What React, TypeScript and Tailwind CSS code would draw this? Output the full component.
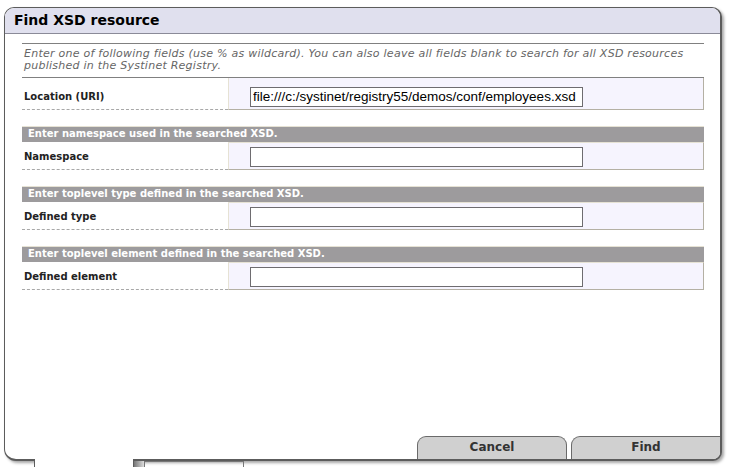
import React from 'react';

const rows = [
  { title: null, label: 'Location (URI)', value: 'file:///c:/systinet/registry55/demos/conf/employees.xsd' },
  { title: 'Enter namespace used in the searched XSD.', label: 'Namespace', value: '' },
  { title: 'Enter toplevel type defined in the searched XSD.', label: 'Defined type', value: '' },
  { title: 'Enter toplevel element defined in the searched XSD.', label: 'Defined element', value: '' },
];

function FieldRow({ label, value, first }: { label: string; value: string; first?: boolean }) {
  return (
    <div className="flex">
      <div
        className={
          'w-[206px] pl-[2px] border-b border-dashed border-[#a8a8a8] text-[10px] leading-[20px] font-bold text-[#222] pb-[2px] ' +
          (first ? 'pt-[9px]' : 'pt-[5px]')
        }
      >
        {label}
      </div>
      <div
        className={
          'flex-1 bg-[#f6f4fe] border-l border-l-[#e6e2d4] border-r border-b border-[#b4b0a4] pl-[21px] ' +
          (first ? 'pt-[9px] pb-[2px]' : 'border-t border-t-[#e6e2d4] pt-[4px] pb-[2px]')
        }
      >
        <input
          readOnly
          value={value}
          className="block w-[333px] h-[20px] bg-white border border-[#6e6c70] px-[2px] text-[13.5px] text-black outline-none font-['Liberation_Sans',Arial,sans-serif]"
        />
      </div>
    </div>
  );
}

export default function App() {
  return (
    <div className="w-[729px] h-[467px] bg-white overflow-hidden relative font-['DejaVu_Sans',Verdana,sans-serif]">
      <div className="ml-[4px] mt-[7px] w-[718px] h-[454px] border border-[#5c5c5c] border-r-2 border-b-2 rounded-tl-[10px] rounded-tr-[10px] rounded-bl-[12px] rounded-br-[9px] shadow-[2px_2px_3px_rgba(0,0,0,0.35)] flex flex-col overflow-hidden relative z-10 bg-white">
        <div className="h-[26px] shrink-0 bg-[#e0e0ee] border-b border-[#8a8a98] pl-[9px] text-[14px] leading-[25px] font-bold text-black">
          Find XSD resource
        </div>

        <div className="ml-[17px] w-[682px] mt-[9px]">
          <div className="border-t border-b border-[#808080] pt-[4px] pb-[5px] text-[11px] leading-[12px] tracking-[0.25px] italic text-[#666] pl-[2px]">
            Enter one of following fields (use % as wildcard). You can also leave all fields blank to search for all XSD resources published in the Systinet Registry.
          </div>

          {rows.map((r, i) => (
            <div key={i} className={i > 0 ? 'mt-[16px]' : ''}>
              {r.title && (
                <div className="h-[16px] bg-[#9d9b9d] border-t border-[#e6e2d4] pl-[6px] text-[10px] leading-[14px] font-bold text-white">
                  {r.title}
                </div>
              )}
              <FieldRow label={r.label} value={r.value} first={i === 0} />
            </div>
          ))}
        </div>

        <div className="flex-1" />

        <div className="flex justify-end gap-[4px] h-[23px] shrink-0">
          <div className="w-[150px] bg-[#d0d0d0] border border-b-0 border-[#6a6a6a] rounded-t-[9px] text-center text-[12px] leading-[21px] font-bold text-[#333]">
            Cancel
          </div>
          <div className="w-[149px] bg-[#d0d0d0] border-l border-t border-[#6a6a6a] rounded-tl-[9px] text-center text-[12px] leading-[21px] font-bold text-[#333]">
            Find
          </div>
        </div>
      </div>

      <div className="flex h-[8px] -mt-[2px] relative z-20">
        <div className="w-[34px]" />
        <div className="w-[100px] bg-white border-l border-r border-[#5c5c5c]" />
        <div className="w-[10px] mt-[2px] bg-gradient-to-r from-[#777] to-[#ddd]" />
        <div className="w-[100px] mt-[2px] border-t border-l border-r border-[#777]" />
      </div>
    </div>
  );
}
